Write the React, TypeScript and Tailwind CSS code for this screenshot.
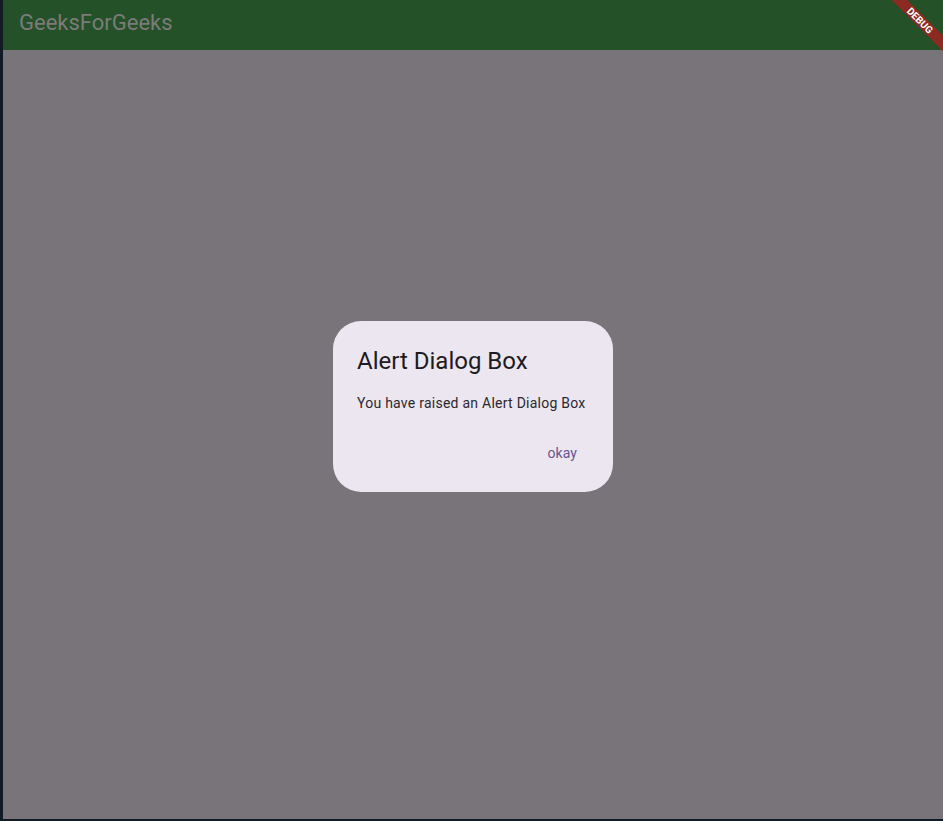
export default function App() {
  return (
    <div
      className="relative flex h-[821px] w-[943px] overflow-hidden bg-[#101b26]"
      style={{ fontFamily: "Roboto, 'Liberation Sans', sans-serif" }}
    >
      <div className="ml-[3px] mb-[2px] flex flex-1 flex-col bg-[#79747a]">
        <header className="flex h-[50px] items-center bg-[#245128] pb-[6px] pl-4">
          <h1 className="text-[22px] text-[#7b7b7b]">GeeksForGeeks</h1>
        </header>

        <main className="flex flex-1 justify-center pt-[271px]">
          <div className="flex h-[171px] w-[280px] flex-col rounded-[28px] bg-[#ece6f0] px-6 pt-6">
            <h2 className="text-[24px] leading-8 text-[#1d1b20]">Alert Dialog Box</h2>
            <p className="mt-4 text-[14px] leading-5 tracking-[0.25px] text-[#2b2830]">
              You have raised an Alert Dialog Box
            </p>
            <div className="mt-5 flex justify-end">
              <button className="h-10 px-3 text-[14px] font-normal tracking-[0.1px] text-[#65558f]">
                okay
              </button>
            </div>
          </div>
        </main>
      </div>

      {/* debug banner */}
      <div className="absolute left-[870px] top-[15px] flex h-[11px] w-[100px] rotate-45 items-center justify-center bg-[#8a2a21]">
        <span className="text-[10px] font-bold leading-none text-white">DEBUG</span>
      </div>
    </div>
  );
}
